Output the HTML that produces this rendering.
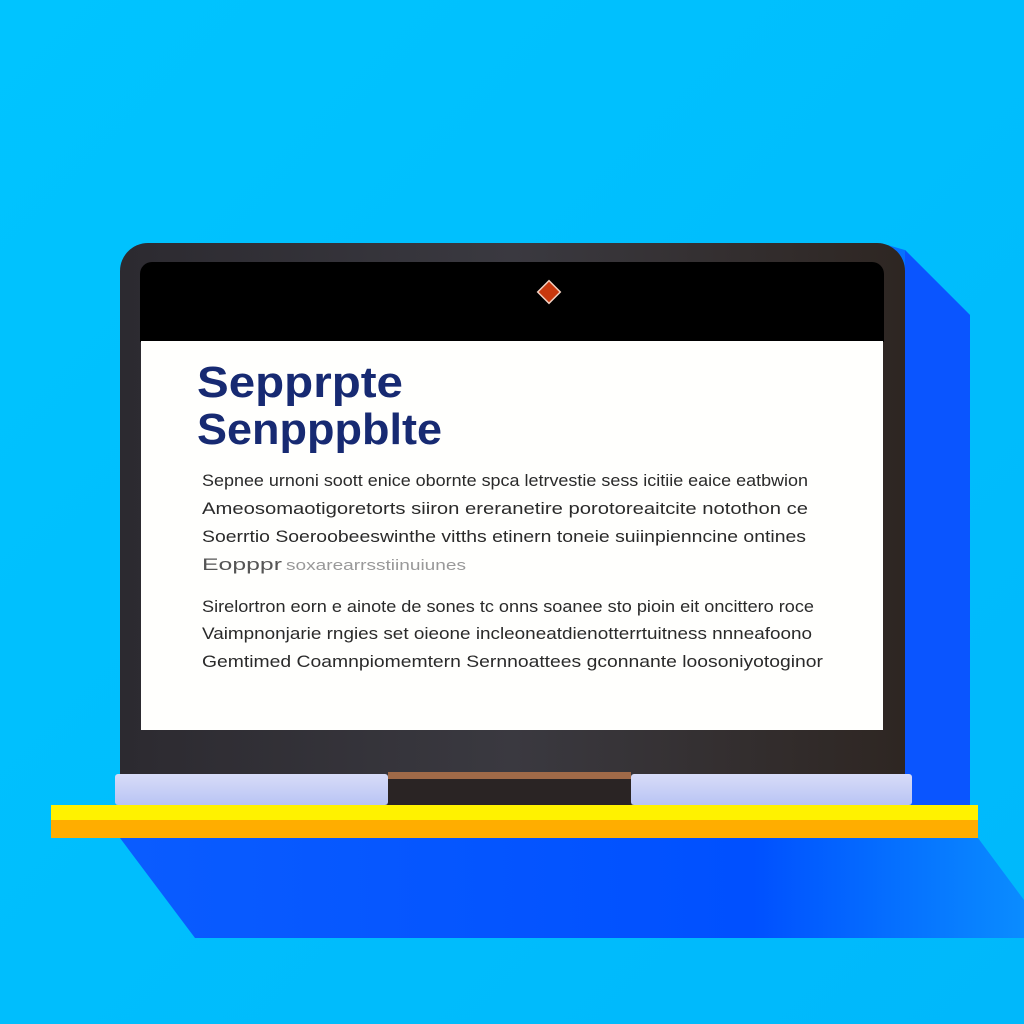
<!DOCTYPE html>
<html><head><meta charset="utf-8"><style>
html,body{margin:0;padding:0;width:1024px;height:1024px;overflow:hidden;background:#00bfff}
svg{display:block}
</style></head><body>
<svg width="1024" height="1024" viewBox="0 0 1024 1024" xmlns="http://www.w3.org/2000/svg">
<defs>
<linearGradient id="bg" x1="0" y1="0" x2="1" y2="1"><stop offset="0" stop-color="#00c4ff"/><stop offset="1" stop-color="#00b8fb"/></linearGradient>
<linearGradient id="sh" x1="0" y1="0" x2="1" y2="0"><stop offset="0" stop-color="#0a5cff"/><stop offset="0.7" stop-color="#0050ff"/><stop offset="1" stop-color="#0a8cff"/></linearGradient>
<linearGradient id="bez" x1="0" y1="0" x2="1" y2="0"><stop offset="0" stop-color="#2c2a30"/><stop offset="0.5" stop-color="#3a3940"/><stop offset="1" stop-color="#2e2622"/></linearGradient>
<linearGradient id="foot" x1="0" y1="0" x2="0" y2="1"><stop offset="0" stop-color="#d8dcf8"/><stop offset="1" stop-color="#b8c4f4"/></linearGradient>
</defs>
<rect width="1024" height="1024" fill="url(#bg)"/>
<!-- shadow -->
<polygon points="880,243 905,250 970,315 970,805 978,838 1024,900 1024,938 195,938 120,838 905,838" fill="url(#sh)"/>
<polygon points="905,250 970,315 970,805 905,805" fill="#0a55ff"/>
<!-- laptop body -->
<rect x="120" y="243" width="785" height="565" rx="28" fill="url(#bez)"/>
<rect x="140" y="262" width="744" height="80" rx="12" fill="#000"/>
<rect x="140" y="330" width="744" height="12" fill="#000"/>
<rect x="141" y="341" width="742" height="389" fill="#fffffd"/>
<rect x="541" y="284" width="16" height="16" transform="rotate(45 549 292)" fill="#c8380e" stroke="#f3d0c0" stroke-width="1.5"/>
<!-- heading -->
<g font-family="Liberation Sans, sans-serif" font-weight="bold" fill="#172a72">
<text x="197" y="397" font-size="44" textLength="206" lengthAdjust="spacingAndGlyphs">Sepprpte</text>
<text x="197" y="444" font-size="44" textLength="245" lengthAdjust="spacingAndGlyphs">Senpppblte</text>
</g>
<g font-family="Liberation Sans, sans-serif" font-size="17" fill="#2a2a2a">
<text x="202" y="486" textLength="606" lengthAdjust="spacingAndGlyphs">Sepnee urnoni soott enice obornte spca letrvestie sess icitiie eaice eatbwion</text>
<text x="202" y="514" textLength="606" lengthAdjust="spacingAndGlyphs">Ameosomaotigoretorts siiron ereranetire porotoreaitcite notothon ce</text>
<text x="202" y="542" textLength="604" lengthAdjust="spacingAndGlyphs">Soerrtio Soeroobeeswinthe vitths etinern toneie suiinpienncine ontines</text>
<text x="202" y="570" textLength="80" lengthAdjust="spacingAndGlyphs" fill="#555">Eopppr</text>
<text x="286" y="570" textLength="180" lengthAdjust="spacingAndGlyphs" fill="#999" font-size="15">soxarearrsstiinuiunes</text>
<text x="202" y="612" textLength="612" lengthAdjust="spacingAndGlyphs">Sirelortron eorn e ainote de sones tc onns soanee sto pioin eit oncittero roce</text>
<text x="202" y="639" textLength="610" lengthAdjust="spacingAndGlyphs">Vaimpnonjarie rngies set oieone incleoneatdienotterrtuitness nnneafoono</text>
<text x="202" y="667" textLength="621" lengthAdjust="spacingAndGlyphs">Gemtimed Coamnpiomemtern Sernnoattees gconnante loosoniyotoginor</text>
</g>
<!-- hinge -->
<rect x="388" y="772" width="243" height="7" fill="#a06a48"/>
<rect x="388" y="779" width="243" height="27" fill="#2a2424"/>
<!-- feet -->
<rect x="115" y="774" width="273" height="31" rx="3" fill="url(#foot)"/>
<rect x="631" y="774" width="281" height="31" rx="3" fill="url(#foot)"/>
<!-- shelf -->
<rect x="51" y="805" width="927" height="15" fill="#fff200"/>
<rect x="51" y="820" width="927" height="18" fill="#ffad00"/>
</svg>
</body></html>
